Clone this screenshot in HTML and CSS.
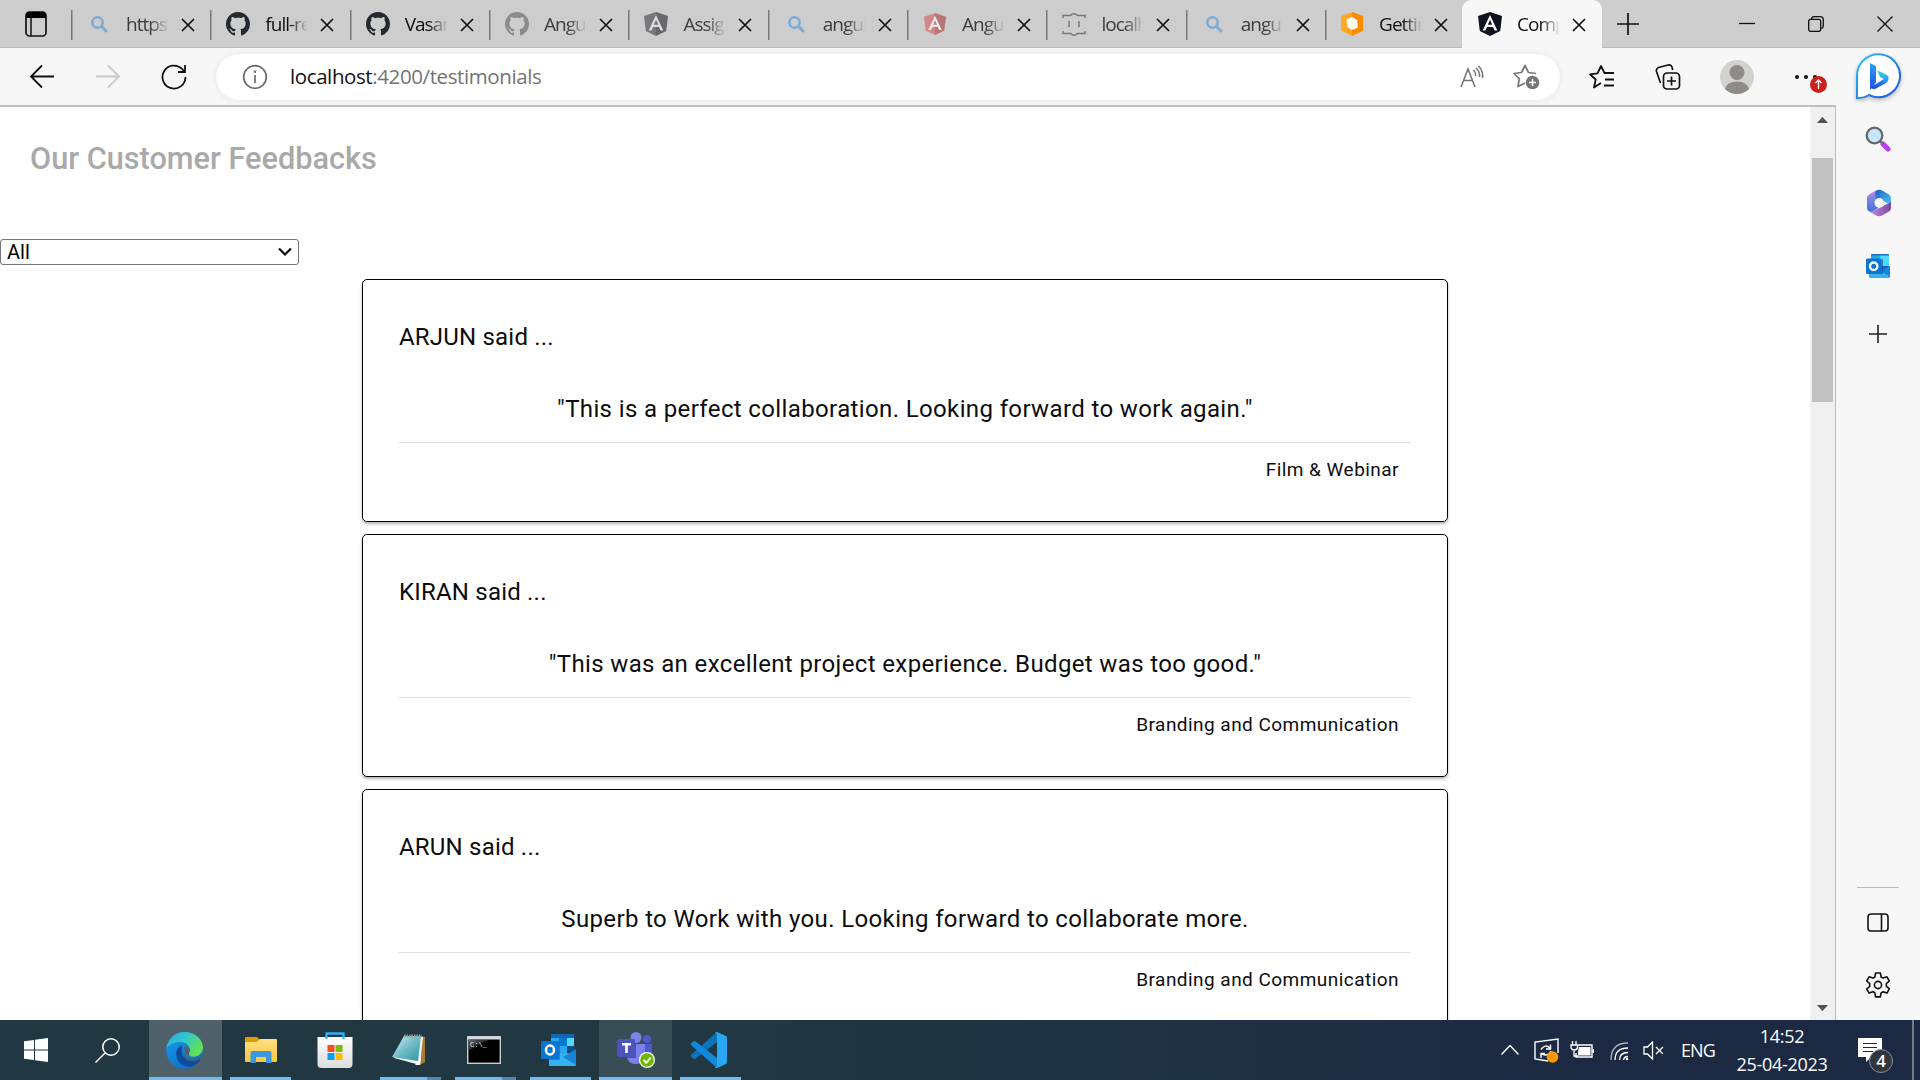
FILE: index.html
```html
<!DOCTYPE html>
<html lang="en">
<head>
<meta charset="utf-8">
<title>Company</title>
<link rel="stylesheet" href="styles.css">
</head>
<body>
<svg class="defs" width="0" height="0">
  <defs>
    <linearGradient id="gBlue" x1="0" y1="0" x2="1" y2="1"><stop offset="0" stop-color="#2bc4f5"/><stop offset="1" stop-color="#1b4fd8"/></linearGradient>
    <linearGradient id="gBing" x1="0" y1="0" x2="0" y2="1"><stop offset="0" stop-color="#2fa0f5"/><stop offset="1" stop-color="#1b48e0"/></linearGradient>
    <linearGradient id="gBing2" x1="0" y1="0" x2="0" y2="1"><stop offset="0" stop-color="#35e0d8"/><stop offset="1" stop-color="#2b8cf0"/></linearGradient>
    <linearGradient id="gEdgeTop" x1="0" y1="0" x2="1" y2=".5"><stop offset="0" stop-color="#2aa9e0"/><stop offset=".5" stop-color="#30c6cf"/><stop offset="1" stop-color="#62e152"/></linearGradient>
    <linearGradient id="gEdgeL" x1="0" y1="0" x2=".6" y2="1"><stop offset="0" stop-color="#1c9ee8"/><stop offset="1" stop-color="#0a6fd0"/></linearGradient>
    <linearGradient id="gFolder" x1="0" y1="0" x2="0" y2="1"><stop offset="0" stop-color="#ffe083"/><stop offset="1" stop-color="#fbc63c"/></linearGradient>
    <linearGradient id="gStore" x1="0" y1="0" x2="0" y2="1"><stop offset="0" stop-color="#fff"/><stop offset="1" stop-color="#dcdcdc"/></linearGradient>
    <linearGradient id="gNote" x1="0" y1="0" x2="1" y2="1"><stop offset="0" stop-color="#d9f3f5"/><stop offset=".5" stop-color="#6fbcc6"/><stop offset="1" stop-color="#2f93a3"/></linearGradient>
    <linearGradient id="gCmd" x1="0" y1="0" x2="1" y2="1"><stop offset="0" stop-color="#666"/><stop offset=".4" stop-color="#222"/><stop offset=".41" stop-color="#000"/></linearGradient>
    <linearGradient id="gM1" x1="0" y1="0" x2="0" y2="1"><stop offset="0" stop-color="#b28be8"/><stop offset="1" stop-color="#3b74d8"/></linearGradient>
    <linearGradient id="gM2" x1="0" y1="0" x2="1" y2="1"><stop offset="0" stop-color="#1d5fc4"/><stop offset="1" stop-color="#4fc9f4"/></linearGradient>
    <linearGradient id="gM3" x1="0" y1="0" x2="1" y2="0"><stop offset="0" stop-color="#c58ee6"/><stop offset="1" stop-color="#7b4aa0"/></linearGradient>
    <symbol id="search" viewBox="0 0 24 24"><circle cx="10.500" cy="10.500" r="5.200" fill="none" stroke="#7eaad4" stroke-width="2.500"/><path d="M14.500 14.500 19 19" stroke="#7eaad4" stroke-width="3" stroke-linecap="round"/></symbol>
    <symbol id="github" viewBox="0 0 16 16"><path fill="currentColor" d="M8 0C3.580 0 0 3.580 0 8c0 3.540 2.290 6.530 5.470 7.590.4.070.55-.17.55-.38 0-.19-.01-.82-.01-1.490-2.010.37-2.530-.49-2.690-.94-.09-.23-.48-.94-.82-1.130-.28-.15-.68-.52-.01-.53.63-.01 1.080.58 1.230.82.72 1.210 1.870.87 2.330.66.070-.52.28-.87.51-1.070-1.780-.2-3.640-.89-3.640-3.950 0-.87.31-1.590.82-2.150-.08-.2-.36-1.020.08-2.120 0 0 .67-.21 2.200.82.64-.18 1.320-.27 2-.27s1.360.09 2 .27c1.530-1.040 2.200-.82 2.200-.82.44 1.100.16 1.920.08 2.120.51.56.82 1.270.82 2.150 0 3.070-1.870 3.750-3.650 3.950.29.25.54.73.54 1.480 0 1.070-.01 1.930-.01 2.200 0 .21.15.46.55.38A8.010 8.010 0 0 0 16 8c0-4.420-3.580-8-8-8z"/></symbol>
    <symbol id="angular" viewBox="0 0 24 24"><path fill="currentColor" d="M12 0 24 4l-1.800 15L12 24 1.800 19 0 4z"/><path class="shade" d="M12 0 24 4l-1.800 15L12 24z"/><path fill="var(--a,#fff)" fill-rule="evenodd" d="M12 3 4.700 18.500h2.700L9 15h6l1.600 3.500h2.700zm0 4.800 2.200 5H9.800z"/></symbol>
    <symbol id="braces" viewBox="0 0 24 24"><path fill="none" stroke="#777" stroke-width="1.500" d="M1 6V3.500h7.500L10.500 2h3l2 1.500H23V6M1 19v2.500h7.500l2 1.500h3l2-1.500H23V19M7 9v6M17 9v6"/></symbol>
    <symbol id="getting" viewBox="0 0 24 24"><path fill="#ffa726" d="M12 0 23 4v14.500L12 24 1 18.500V4z"/><path fill="#fb8c00" d="M12 0 23 4v14.500L12 24z"/><path fill="#fff" opacity=".95" d="m6.500 7 6-2 5 3.500-.5 2.500 1 1-.5 2 .5 1.500-6 2.500-5-3.500.5-2-1-1.500.5-1.500z"/></symbol>
    <symbol id="close" viewBox="0 0 14 14"><path d="m1 1 12 12M13 1 1 13" stroke="#111" stroke-width="1.700"/></symbol>
    <symbol id="outlook" viewBox="0 0 36 34"><path fill="#1066b5" d="M10 1h23v14H10z"/><path fill="#28a8ea" d="M10 5h8v8h-8zM18 13h8v8h-8z"/><path fill="#50d9ff" d="M26 5h7v8h-7z"/><path fill="#0078d4" d="M18 5h8v8h-8z"/><path fill="#0a4d8c" d="M26 13h7v6h-7z"/><path fill="#35b1ee" d="M8 20h27v12q0 1-1 1H9q-1 0-1-1z"/><path fill="#1784d8" d="M35 16v16L22 24z"/><path fill="#0a58a6" opacity=".5" d="M8 9h11v18H8z"/><rect y="8" width="18" height="18" rx="1.500" fill="#0a74d1"/><ellipse cx="9" cy="17" rx="4" ry="4.500" fill="none" stroke="#fff" stroke-width="2.500"/></symbol>
    <symbol id="outlook-small" viewBox="0 0 25 25"><path fill="#1a6fc0" d="M5 1q0-1 1-1h16q1 0 1 1v5H5z"/><path fill="#28a8ea" d="M5 1.500h9V12H5z"/><path fill="#50d9ff" d="M14 1.500h9V12h-9z"/><path fill="#35b1ee" d="M3 13h21v10q0 1-1 1H4q-1 0-1-1z"/><path fill="#1067b8" d="M14 12h10l-8 5z"/><path fill="#1784d8" d="M24 12v11l-9-6z"/><path fill="#0a4f94" opacity=".6" d="M4 5h12q1 0 1 1v14H4z"/><rect y="4.500" width="15.500" height="15.500" rx="1.500" fill="#0a74d1"/><circle cx="7.700" cy="12.200" r="3.700" fill="none" stroke="#fff" stroke-width="2.300"/></symbol>
  </defs>
</svg>
<div class="screen">
  <header class="tabstrip">
    <div class="tab-actions"><svg width="22" height="26" viewBox="0 0 22 26"><rect x="1" y="1" width="20" height="24" rx="3.500" fill="none" stroke="#111" stroke-width="1.700"/><path d="M1 7V4.500A3.500 3.500 0 0 1 4.500 1h13A3.500 3.500 0 0 1 21 4.500V7z"/><path d="M6 7v18" stroke="#111" stroke-width="1.500"/></svg></div>
    <div class="tab dim"><svg class="fav"><use href="#search"/></svg><span class="label">https:</span><svg class="x"><use href="#close"/></svg></div>
    <div class="tab"><svg class="fav gh"><use href="#github"/></svg><span class="label">full-re</span><svg class="x"><use href="#close"/></svg></div>
    <div class="tab"><svg class="fav gh"><use href="#github"/></svg><span class="label">Vasan</span><svg class="x"><use href="#close"/></svg></div>
    <div class="tab dim"><svg class="fav gh-dim"><use href="#github"/></svg><span class="label">Angu</span><svg class="x"><use href="#close"/></svg></div>
    <div class="tab dim"><svg class="fav ng-grey"><use href="#angular"/></svg><span class="label">Assig</span><svg class="x"><use href="#close"/></svg></div>
    <div class="tab dim"><svg class="fav"><use href="#search"/></svg><span class="label">angul</span><svg class="x"><use href="#close"/></svg></div>
    <div class="tab dim"><svg class="fav ng-red"><use href="#angular"/></svg><span class="label">Angu</span><svg class="x"><use href="#close"/></svg></div>
    <div class="tab dim"><svg class="fav"><use href="#braces"/></svg><span class="label">localh</span><svg class="x"><use href="#close"/></svg></div>
    <div class="tab dim"><svg class="fav"><use href="#search"/></svg><span class="label">angu</span><svg class="x"><use href="#close"/></svg></div>
    <div class="tab last"><svg class="fav"><use href="#getting"/></svg><span class="label">Gettin</span><svg class="x"><use href="#close"/></svg></div>
    <div class="tab active"><svg class="fav ng-black"><use href="#angular"/></svg><span class="label">Comp</span><svg class="x"><use href="#close"/></svg></div>
    <svg class="new-tab" width="22" height="22" viewBox="0 0 22 22"><path d="M11 0v22M0 11h22" stroke="#111" stroke-width="1.700"/></svg>
    <div class="window-buttons">
      <svg width="16" height="16" viewBox="0 0 16 16"><path d="M0 7.500h16" stroke="#111" stroke-width="1.300"/></svg>
      <svg width="16" height="16" viewBox="0 0 16 16" fill="none" stroke="#111" stroke-width="1.300"><rect x=".7" y="3.300" width="12" height="12" rx="2"/><path d="M3.500 3Q3.700.7 6 .7h6.300q3 0 3 3V10q0 2-2 2.500"/></svg>
      <svg width="16" height="16" viewBox="0 0 16 16"><path d="m.5.5 15 15M15.500.5l-15 15" stroke="#111" stroke-width="1.300"/></svg>
    </div>
  </header>

  <nav class="toolbar">
    <svg width="26" height="26" viewBox="0 0 26 26" fill="none" stroke="#111" stroke-width="1.800"><path d="M25 12.500H2M13 1.500l-11 11 11 11"/></svg>
    <svg class="fwd" width="26" height="26" viewBox="0 0 26 26" fill="none" stroke="#cacaca" stroke-width="1.800"><path d="M1 12.500h23M13 1.500l11 11-11 11"/></svg>
    <svg class="reload" width="26" height="26" viewBox="0 0 26 26" fill="none" stroke="#111" stroke-width="1.800"><path d="M24.500 13A11.500 11.500 0 1 1 21 4.800l2.500 2.500M24 1v7h-7"/></svg>
    <div class="address">
      <svg width="26" height="26" viewBox="0 0 26 26"><circle cx="13" cy="13" r="11.300" fill="none" stroke="#6b6b6b" stroke-width="1.700"/><path d="M13 11v8" stroke="#6b6b6b" stroke-width="1.700"/><circle cx="13" cy="7.700" r="1.300" fill="#6b6b6b"/></svg>
      <span class="url"><b>localhost</b>:4200/testimonials</span>
      <svg class="aloud" width="24" height="24" viewBox="0 0 24 24" fill="none" stroke="#767676" stroke-width="1.600"><path d="m1 22 7-18 7 18M3.500 15.500h9M13.500 5q2.500 2.500 2 6M16 3q4 3.500 3.500 9M18.500 1q5 5 4 12"/></svg>
      <svg width="27" height="27" viewBox="0 0 27 27"><path d="M12 20 5 23.500l1.300-7.700L1 10.500l7.500-1L12 2.500l3.500 7 7.500 1" fill="none" stroke="#767676" stroke-width="1.700" stroke-linejoin="round"/><circle cx="19.500" cy="19.500" r="6.800" fill="#767676"/><path d="M19.500 16v7M16 19.500h7" stroke="#fff" stroke-width="1.500"/></svg>
    </div>
    <svg class="favlist" width="26" height="26" viewBox="0 0 26 26" fill="none" stroke="#111" stroke-width="1.800" stroke-linejoin="round"><path d="m12 19-7 4.500 1.700-8L1 10.300l7.500-1L12 2l3.500 7H25M16 15.500h9M15 21.500h10"/></svg>
    <svg class="collect" width="26" height="26" viewBox="0 0 26 26" fill="none" stroke="#111" stroke-width="1.700"><rect x="8.500" y="9" width="16" height="16" rx="3.500"/><path d="M16.500 12.500v9M12 17h9M5.500 19 1.500 7.500q-.7-3 2-4L13 1q3-.7 4 2l.7 3"/></svg>
    <svg class="avatar" width="34" height="34" viewBox="0 0 34 34"><circle cx="17" cy="17" r="17" fill="#d3d1ce"/><circle cx="17" cy="12.500" r="7.500" fill="#8e8b88"/><path d="M5 29q2-7.500 12-7.500T29 29a17 17 0 0 1-24 0" fill="#8e8b88"/></svg>
    <div class="more"><i></i><i></i><i></i><svg class="alert" width="17" height="17" viewBox="0 0 17 17"><circle cx="8.500" cy="8.500" r="8.500" fill="#c9211e"/><path d="M8.500 13V4M5.500 7l3-3 3 3" fill="none" stroke="#fff" stroke-width="1.400"/></svg></div>
    <svg class="bing" width="46" height="48" viewBox="0 0 46 48"><path d="M2 45V23A21.500 21.500 0 1 1 14 42Q9 45 2 45z" fill="#fff" stroke="url(#gBlue)" stroke-width="2"/><path d="m15 10 6 3v16l-6 8z" fill="url(#gBing)"/><path d="M15 30v4q2 3 6 1.500l10-5.500q3-3 2-6l-5 2.500-8 5z" fill="url(#gBing)"/><path d="m22 17 3 7 4 2-2 3q5 1 6.500-3 .5-3-2.500-4.500z" fill="url(#gBing2)"/></svg>
  </nav>

  <div class="workspace">
    <main class="page">
      <h1>Our Customer Feedbacks</h1>
      <div class="select"><span>All</span><svg width="14" height="10" viewBox="0 0 14 10"><path d="m1 1.500 6 6 6-6" fill="none" stroke="#111" stroke-width="2.200"/></svg></div>
      <section class="cards">
        <article class="card"><h2>ARJUN said ...</h2><p class="quote">"This is a perfect collaboration. Looking forward to work again."</p><p class="category">Film &amp; Webinar</p></article>
        <article class="card"><h2>KIRAN said ...</h2><p class="quote">"This was an excellent project experience. Budget was too good."</p><p class="category">Branding and Communication</p></article>
        <article class="card"><h2>ARUN said ...</h2><p class="quote">Superb to Work with you. Looking forward to collaborate more.</p><p class="category">Branding and Communication</p></article>
      </section>
    </main>
    <div class="scrollbar">
      <svg width="11" height="6" viewBox="0 0 11 6"><path d="M0 6 5.500 0 11 6z" fill="#505050"/></svg>
      <div class="thumb"></div>
      <svg class="down" width="11" height="6" viewBox="0 0 11 6"><path d="M0 0h11L5.500 6z" fill="#505050"/></svg>
    </div>
    <aside class="sidebar">
      <svg width="26" height="26" viewBox="0 0 26 26"><path d="m18 18 5 5" stroke="#b93cf5" stroke-width="5" stroke-linecap="round"/><path d="m14.500 14.500 3 3" stroke="#777" stroke-width="2.500"/><circle cx="9.500" cy="9.500" r="7.800" fill="#c5e6fa" stroke="#666" stroke-width="2.300"/></svg>
      <svg class="m365" width="26" height="28" viewBox="0 0 26 28"><path d="M10 1.500 3 5.500Q1 7 1 9v10q0 2 2 3.500l3 .5 6-4-2-8V1.500z" fill="url(#gM1)"/><path d="M9.500 2Q13 0 16 1.500l7 4q2 1.500 2 3.500v7l-8-4-7.500-2z" fill="url(#gM2)"/><path d="M25 13v6q0 2-2 3.500l-7 4q-3 1.500-6 0L3 22.500q3 .5 6-1.500l6-3z" fill="url(#gM3)"/><circle cx="13.300" cy="13.800" r="4.800" fill="#f7f7f7"/></svg>
      <svg class="ol" width="25" height="25"><use href="#outlook-small"/></svg>
      <svg class="plus" width="18" height="18" viewBox="0 0 18 18"><path d="M9 0v18M0 9h18" stroke="#222" stroke-width="1.600"/></svg>
      <hr>
      <svg width="22" height="19" viewBox="0 0 22 19" fill="none" stroke="#111" stroke-width="1.600"><rect x="1" y="1" width="20" height="17" rx="3"/><path d="M14.500 1v17"/></svg>
      <svg class="gear" width="26" height="26" viewBox="0 0 26 26" fill="none" stroke="#111" stroke-width="1.600" stroke-linejoin="round"><circle cx="13" cy="13" r="3.600"/><path d="m10.600 1h4.800l.7 4 2 1.100 3.800-1.300L24.300 9l-3 2.600v2.600l3 2.700-2.400 4.200-3.800-1.400-2 1.200-.7 4h-4.800l-.7-4-2-1.200-3.800 1.400L1.700 17l3-2.700v-2.600L1.700 9l2.400-4.200 3.800 1.300 2-1.100z"/></svg>
    </aside>
  </div>

  <footer class="taskbar">
    <div class="task start"><svg width="24" height="24" viewBox="0 0 24 24" fill="#fff"><path d="m0 3.300 10-1.400V11.500H0zM11 1.700 24 0v11.500H11zM0 12.500h10v9.600L0 20.700zM11 12.500h13V24l-13-1.700z"/></svg></div>
    <div class="task find"><svg width="25" height="25" viewBox="0 0 25 25" fill="none" stroke="#fff" stroke-width="1.500"><circle cx="16" cy="9" r="8.200"/><path d="M10 15 .5 24.500"/></svg></div>
    <div class="task current"><svg width="37" height="37" viewBox="0 0 36 36"><circle cx="18" cy="18" r="17.800" fill="url(#gEdgeL)"/><path d="M0 17C2 6 9 0 18 0c11 0 18 8 18 15 0 5-4 9-9 9-4 0-5-1-5-3 0-1 2-2 1-5-1-5-7-7-12-6-6 1-10 4-11 7z" fill="url(#gEdgeTop)"/><path d="M16 13c-8 2-8 14 0 19 6 3 13 2 17-4 1-1 0-2-1-1-4 2-10 2-13-1-4-4-4-7-3-13z" fill="#114a98"/><path d="M18 14c-2 4 0 9 4 11 4 1.500 8 1 11-1l3 1v4l-2-2q-1-1-3 0-7 2-11-1-5-4-2-12z" fill="#4f616a"/><path d="M18 14c3-1 6 2 5 5-1 1-1 3 0 4-4-1-6-5-5-9z" fill="#4f616a"/></svg></div>
    <div class="task open"><svg width="32" height="26" viewBox="0 0 32 26"><path d="M0 1q0-1 1-1h11l3 3v4H0z" fill="#e09d00"/><path d="M0 5h12l3-3h16q1 0 1 1v21q0 1-1 1H1q-1 0-1-1z" fill="url(#gFolder)"/><path d="M5.500 26V16q0-2 2-2h17q2 0 2 2v10H21v-6H11v6z" fill="#3b97e0"/></svg></div>
    <div class="task nudge"><svg width="36" height="36" viewBox="0 0 36 36"><path d="M.5 5h35v27q0 4-4 4h-27q-4 0-4-4z" fill="url(#gStore)"/><path d="M9.500 7V1.500h17V7" fill="none" stroke="#2db2f5" stroke-width="2.300"/><path fill="#f25022" d="M10.500 13h7v7h-7z"/><path fill="#7fba00" d="M18.500 13h7v7h-7z"/><path fill="#00a4ef" d="M10.500 21h7v7h-7z"/><path fill="#ffb900" d="M18.500 21h7v7h-7z"/></svg></div>
    <div class="task open multi pad"><svg width="34" height="32" viewBox="0 0 34 32"><path d="m29 2 4 1v25l-5 3z" fill="#a97c38"/><path d="m12 2 19 1-3 28-26-7z" fill="#edf5f5"/><path d="M12 2h17l-3 25L0 23z" fill="url(#gNote)"/><path d="M12 2h18" stroke="#999" stroke-width="3" stroke-dasharray="1.500 1"/><path d="M23 31l6-8-1 8z" fill="#fff"/></svg></div>
    <div class="task open multi pad"><svg width="34" height="28" viewBox="0 0 34 28"><rect x=".7" y=".7" width="32.600" height="26.600" fill="#000" stroke="#c7cdd0" stroke-width="1.400"/><path d="M1 1h32v2.500H1z" fill="#d5dade"/><path d="M2 4h25Q8 7 2 17z" fill="url(#gCmd)"/><text x="3" y="10.500" class="prompt">C:\_</text></svg></div>
    <div class="task open pad"><svg width="36" height="34"><use href="#outlook"/></svg></div>
    <div class="task current teams"><svg width="38" height="38" viewBox="0 0 38 38"><circle cx="19" cy="6.500" r="5.500" fill="#7b83eb"/><circle cx="30" cy="8" r="4" fill="#5059c9"/><path d="M25 13h10v9q0 5-5 5h-5z" fill="#5059c9"/><path d="M10 13h18v11q0 9-9 9t-9-9z" fill="#7b83eb"/><path d="M10 13h9v14h-9z" fill="#4b53b8"/><rect x="0" y="8" width="18" height="18" rx="1.500" fill="#4b53bc"/><path d="M5 12h9v2.400h-3.200V22H8.200v-7.600H5z" fill="#fff"/><circle cx="30" cy="29" r="8" fill="#fff"/><circle cx="30" cy="29" r="6.800" fill="#6bb700"/><path d="m26.500 29 2.700 2.700 4.500-5" fill="none" stroke="#fff" stroke-width="2"/></svg></div>
    <div class="task open pad"><svg width="36" height="36" viewBox="0 0 36 36"><path d="M0 24.500Q-.5 23 1 22L26 0v10L4.500 26.800Q3 27.500 2 26.500z" fill="#0b74bd"/><path d="M0 11.500Q-.5 13 1 14l25 22V26L4.500 9.200Q3 8.500 2 9.500z" fill="#1089d8"/><path d="m26 0 9 4q1 .5 1 2v24q0 1.500-1 2l-9 4q-1 .3-2-1 2 0 2-2V3q0-2-2-2 1-1 2-1z" fill="#29a7f3"/></svg></div>
    <div class="tray">
      <svg class="up" width="18" height="10" viewBox="0 0 18 10" fill="none" stroke="#fff" stroke-width="1.400"><path d="m.5 9.500 8.500-9 8.500 9"/></svg>
      <svg class="sync" width="25" height="25" viewBox="0 0 25 25" fill="none" stroke="#fff" stroke-width="1.400"><path d="M24 15V1L1 4v17l13 2M7 11.500q4-6 9-1.500M16.500 6.500V11H12M17 13q-3 6-9 3M7 20v-4.500h4"/><circle cx="18.500" cy="19" r="5.800" fill="#ff9800" stroke="none"/></svg>
      <svg class="battery" width="25" height="18" viewBox="0 0 25 18"><path d="M8 4h14v12H6v-4" fill="none" stroke="#fff" stroke-width="1.400"/><path d="M9 6h11.500v8.500H8V11zM22.500 8H24v4h-1.500z" fill="#fff"/><path d="M2.500 0v4M6 0v4M1 4h6.500v2.500Q7 9 4.300 9T1 6.500zM4 9v6h4" fill="none" stroke="#fff" stroke-width="1.300"/></svg>
      <svg class="wifi" width="19" height="19" viewBox="0 0 19 19" fill="none" stroke="#fff" stroke-width="1.300"><path d="M1 18Q1 1 18 1" opacity=".65"/><path d="M5 18Q5 6 18 6M9.500 18q0-7.500 8.500-7.500M13.500 18q.5-3.500 4.500-3.500"/><circle cx="17" cy="17" r="1.300" fill="#fff" stroke="none"/></svg>
      <svg class="mute" width="21" height="19" viewBox="0 0 21 19" fill="none" stroke="#fff" stroke-width="1.300"><path d="M1 6h3.500L9.500 1v17l-5-5H1zM13 6l7 7M20 6l-7 7"/></svg>
      <span class="lang">ENG</span>
      <div class="clock"><span>14:52</span><span>25-04-2023</span></div>
      <div class="notify"><svg width="24" height="24" viewBox="0 0 24 24"><path d="M0 0h24v19H13l-5 5v-5H0z" fill="#fff"/><path d="M5 5.500h14M5 9.500h14M5 13.500h10" stroke="#1b2942" stroke-width="1.200"/></svg><span class="count">4</span></div>
      <div class="peek"></div>
    </div>
  </footer>
</div>
</body>
</html>
```
FILE: styles.css
```css
* { box-sizing: border-box; }
body { margin: 0; width: 1920px; height: 1080px; overflow: hidden; font-family: "Open Sans", "Noto Sans", sans-serif; color: #111; }
svg { display: block; flex: none; }
.defs { position: absolute; }
.screen { display: flex; flex-direction: column; height: 1080px; }

.tabstrip { display: flex; height: 48px; background: #cdcdcd; box-shadow: inset 0 -1px #b9b9b9; }
.tab-actions { width: 71px; display: flex; align-items: center; padding: 0 0 1px 25px; }
.tab { width: 139.350px; display: flex; align-items: center; flex: none; padding-left: 16px; background: linear-gradient(#777, #777) 0 10px / 1.500px 30px no-repeat; }
.tab .fav { width: 24px; height: 24px; }
.tab .label { width: 43px; margin-left: 15px; overflow: hidden; white-space: nowrap; font-size: 19px; letter-spacing: -1px; line-height: 30px; -webkit-mask-image: linear-gradient(90deg, #000 55%, transparent); mask-image: linear-gradient(90deg, #000 55%, transparent); }
.tab .x { width: 14px; height: 14px; margin: 2px 0 0 12px; }
.dim .label { color: #3c3c3c; }
.gh { color: #24292f; }
.gh-dim { color: #8b8b8b; }
.ng-grey { color: #77787c; --a: #ddd; }
.ng-red { color: #d38787; --a: #eee; padding: 1px; }
.ng-black { color: #101521; }
.shade { fill: #000; opacity: .13; }
.tab.last { width: 137px; padding-left: 15px; }
.tab.active { width: 140px; background: #f7f7f7; border-radius: 9px 9px 0 0; }
.new-tab { margin: 13px 0 0 15px; }
.window-buttons { display: flex; gap: 53px; margin: 16px 27px 0 auto; }

.toolbar { display: flex; align-items: center; height: 57px; background: #f7f7f7; padding-left: 29px; }
.fwd { margin-left: 40px; }
.reload { margin-left: 40px; }
.address { width: 1344px; height: 46px; margin-left: 29px; padding: 0 20px 0 26px; display: flex; align-items: center; background: #fff; border-radius: 23px; box-shadow: 0 0 7px rgba(0,0,0,.09); }
.url { margin-left: 22px; padding-bottom: 2px; font-size: 20.500px; letter-spacing: -.4px; color: #737373; white-space: nowrap; }
.url b { font-weight: 400; color: #111; }
.aloud { margin: 0 29px 0 auto; }
.favlist { margin-left: 29px; }
.collect { margin-left: 40px; }
.avatar { margin-left: 39px; }
.more { position: relative; display: flex; gap: 5px; margin-left: 41px; width: 32px; }
.more i { width: 4px; height: 4px; border-radius: 50%; background: #111; }
.alert { position: absolute; left: 15px; top: 1px; }
.bing { margin-left: 28px; filter: drop-shadow(0 2px 2px rgba(0,0,0,.25)); }

.workspace { display: flex; height: 915px; }
.page { width: 1810px; border-top: 2px solid #bebebe; background: #fff; font-family: Roboto, sans-serif; overflow: hidden; color: #0d0d0d; }
.page h1 { margin: 31px 0 0 30px; font-size: 30.700px; line-height: 41px; font-weight: 500; color: #a9a9a9; }
.select { display: flex; align-items: center; justify-content: space-between; width: 299px; height: 26px; margin-top: 60px; padding: 0 6px; border: 1px solid #767676; border-radius: 3px; font-size: 20px; color: #000; }
.cards { display: flex; flex-direction: column; gap: 12px; width: 1086px; margin: 14px auto 0 362px; }
.card { height: 243px; flex: none; padding: 36px; border: 1px solid #000; border-radius: 5px; box-shadow: 0 2px 3px rgba(0,0,0,.3); }
.card h2 { margin: 6px 0 0; font-size: 24px; line-height: 30px; font-weight: 400; letter-spacing: .2px; }
.quote { height: 57px; margin: 34px 0 0; padding-top: 8px; border-bottom: 1px solid #e0e0e0; text-align: center; font-size: 24px; line-height: 30px; letter-spacing: .37px; white-space: nowrap; }
.category { margin: 14px 12px 0 0; text-align: right; font-size: 19px; line-height: 26px; letter-spacing: .46px; }

.scrollbar { width: 25px; display: flex; flex-direction: column; align-items: center; padding: 10px 0 9px; background: #f0f0f0; border-top: 2px solid #bebebe; }
.thumb { width: 21px; height: 244px; margin-top: 35px; background: #c1c1c1; }
.down { margin-top: auto; }
.sidebar { width: 85px; background: #f7f7f7; border-left: 1px solid #bdbdbd; display: flex; flex-direction: column; align-items: center; padding: 21px 0 0; gap: 37px; }
.m365, .ol { margin-left: 1px; }
.sidebar .plus { margin-top: 9px; margin-right: 1px; }
.sidebar hr { width: 42px; margin: 507px 0 -12px; border: 0; border-top: 1px solid #bdbdbd; }
.gear { margin-top: 3px; }

.taskbar { display: flex; height: 60px; background: linear-gradient(90deg, #213842 0, #213741 40%, #1f3044 65%, #1b2942 85%); color: #fff; }
.task { width: 73px; margin-right: 2px; flex: none; display: flex; align-items: center; justify-content: center; }
.task.start { margin: 0; padding-right: 1px; }
.task.find { margin-right: 3px; padding-right: 4px; }
.task.current:not(.teams) { padding-right: 2px; }
.task.nudge { padding-right: 2px; }
.task.pad { padding-right: 3px; }
.task.open { background: linear-gradient(#76b9ed, #76b9ed) 50% 100% / 61px 3px no-repeat; }
.task.open.multi { background: linear-gradient(90deg, #76b9ed 47px, #5487ad 47px) 50% 100% / 61px 3px no-repeat; }
.task.current { background: linear-gradient(#76b9ed, #76b9ed) 0 100% / 73px 3px no-repeat #4f616a; }
.task.teams { background-color: #394d57; }
.prompt { fill: #eee; font: 7px "Liberation Mono", monospace; }
.tray { display: flex; align-items: center; margin-left: auto; }
.sync { margin-left: 15px; }
.battery { margin-left: 11px; }
.wifi { margin: 2px 0 0 15px; }
.mute { margin-left: 14px; }
.lang { width: 36px; margin: 0 0 0 17px; font-size: 18px; letter-spacing: -.9px; }
.clock { width: 96px; margin-left: 17px; display: flex; flex-direction: column; align-items: center; font-size: 18px; line-height: 28px; letter-spacing: -.3px; white-space: nowrap; }
.notify { position: relative; width: 24px; margin-left: 28px; }
.count { position: absolute; left: 11px; top: 11px; width: 24px; height: 24px; border: 1px solid #8b8f96; border-radius: 50%; background: #30353e; text-align: center; font-size: 17px; line-height: 22px; font-weight: 600; }
.peek { width: 8px; height: 60px; margin-left: 30px; border-left: 2px solid #727b8a; }
```
